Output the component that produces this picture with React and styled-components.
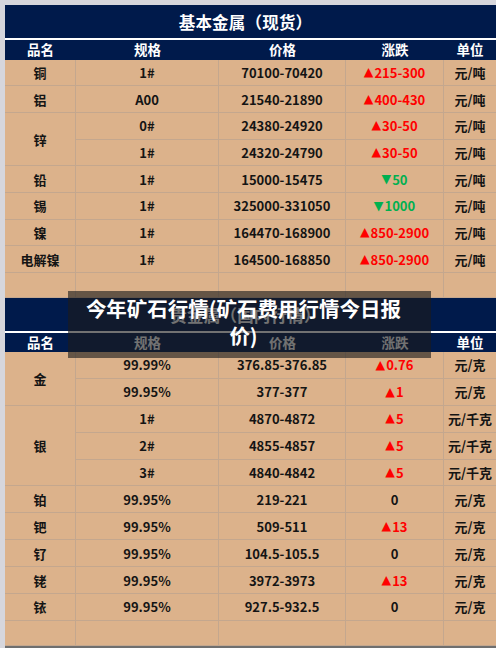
import React from "react";
import styled, { createGlobalStyle } from "styled-components";

const Global = createGlobalStyle`
  html, body { margin: 0; padding: 0; background: #ffffff; }
  body { font-family: "Noto Sans CJK SC", "Noto Sans", sans-serif; }
`;

const NAVY = "#001a4b";
const ORANGE = "#dcb28b";
const LINE = "#c4a78e";

const Page = styled.div`
  position: relative;
  width: 491px;
  border-top: 5px solid #d6d6dc;
  border-left: 5px solid #d6d6dc;
  font-family: "Noto Sans CJK SC", "Noto Sans", sans-serif;
  font-weight: 700;
`;

const Title = styled.div`
  height: 33px;
  background: ${NAVY};
  color: #ffffff;
  font-size: 16.5px;
  display: flex;
  align-items: center;
  justify-content: center;
  padding-right: 10px;
  letter-spacing: 0.2px;
`;

const Sep = styled.div`
  height: 2px;
  background: #ffffff;
`;

const Grid = styled.div`
  display: grid;
  grid-template-columns: 71px 143px 127px 98px 52px;
  grid-template-rows: ${(p) => p.$header}px repeat(${(p) => p.$rows}, ${(p) => p.$rowH}px) ${(p) => p.$tail}px;
`;

const Head = styled.div`
  background: ${NAVY};
  color: #ffffff;
  font-size: 13.5px;
  display: flex;
  align-items: center;
  justify-content: center;
  line-height: 1;
`;

const Cell = styled.div`
  box-sizing: border-box;
  background: ${ORANGE};
  border-bottom: 1px solid ${LINE};
  border-right: ${(p) => (p.$last ? "none" : `1px solid ${LINE}`)};
  grid-row: ${(p) => (p.$span ? `span ${p.$span}` : "auto")};
  color: ${(p) => p.$color || "#141414"};
  font-size: 13px;
  display: flex;
  align-items: center;
  justify-content: center;
  white-space: nowrap;
  line-height: 1;
`;

const Tri = styled.span`
  font-family: "DejaVu Sans", sans-serif;
  font-size: 12.5px;
  margin-right: 1px;
`;

const Bottom = styled.div`
  height: 2px;
  background: #6f6f6f;
`;

const Overlay = styled.div`
  position: absolute;
  left: 63px;
  top: 286px;
  width: 363px;
  height: 67px;
  box-sizing: border-box;
  padding: 4px 22px 0 10px;
  background: rgba(28, 28, 28, 0.62);
  color: #ffffff;
  font-size: 20.5px;
  line-height: 27px;
  text-align: center;
  font-weight: 700;
`;

const basic = [
  { name: "铜", spec: "1#", price: "70100-70420", chg: "▲215-300", unit: "元/吨" },
  { name: "铝", spec: "A00", price: "21540-21890", chg: "▲400-430", unit: "元/吨" },
  { name: "锌", span: 2, spec: "0#", price: "24380-24920", chg: "▲30-50", unit: "元/吨" },
  { spec: "1#", price: "24320-24790", chg: "▲30-50", unit: "元/吨" },
  { name: "铅", spec: "1#", price: "15000-15475", chg: "▼50", unit: "元/吨" },
  { name: "锡", spec: "1#", price: "325000-331050", chg: "▼1000", unit: "元/吨" },
  { name: "镍", spec: "1#", price: "164470-168900", chg: "▲850-2900", unit: "元/吨" },
  { name: "电解镍", spec: "1#", price: "164500-168850", chg: "▲850-2900", unit: "元/吨" },
];

const precious = [
  { name: "金", span: 2, spec: "99.99%", price: "376.85-376.85", chg: "▲0.76", unit: "元/克" },
  { spec: "99.95%", price: "377-377", chg: "▲1", unit: "元/克" },
  { name: "银", span: 3, spec: "1#", price: "4870-4872", chg: "▲5", unit: "元/千克" },
  { spec: "2#", price: "4855-4857", chg: "▲5", unit: "元/千克" },
  { spec: "3#", price: "4840-4842", chg: "▲5", unit: "元/千克" },
  { name: "铂", spec: "99.95%", price: "219-221", chg: "0", unit: "元/克" },
  { name: "钯", spec: "99.95%", price: "509-511", chg: "▲13", unit: "元/克" },
  { name: "钌", spec: "99.95%", price: "104.5-105.5", chg: "0", unit: "元/克" },
  { name: "铑", spec: "99.95%", price: "3972-3973", chg: "▲13", unit: "元/克" },
  { name: "铱", spec: "99.95%", price: "927.5-932.5", chg: "0", unit: "元/克" },
];

const headers = ["品名", "规格", "价格", "涨跌", "单位"];

function Change({ value }) {
  const first = value[0];
  if (first === "▲" || first === "▼") {
    return (
      <>
        <Tri>{first}</Tri>
        {value.slice(1)}
      </>
    );
  }
  return value;
}

function chgColor(v) {
  if (v[0] === "▲") return "#ff0000";
  if (v[0] === "▼") return "#00b050";
  return undefined;
}

function Section({ title, rows, header, rowH, tail }) {
  return (
    <>
      <Title>{title}</Title>
      <Sep />
      <Grid $header={header} $rows={rows.length} $rowH={rowH} $tail={tail}>
        {headers.map((h) => (
          <Head key={h}>{h}</Head>
        ))}
        {rows.map((r, i) => (
          <React.Fragment key={i}>
            {r.name && <Cell $span={r.span}>{r.name}</Cell>}
            <Cell>{r.spec}</Cell>
            <Cell>{r.price}</Cell>
            <Cell $color={chgColor(r.chg)}>
              <Change value={r.chg} />
            </Cell>
            <Cell $last>{r.unit}</Cell>
          </React.Fragment>
        ))}
        <Cell />
        <Cell />
        <Cell />
        <Cell />
        <Cell $last />
      </Grid>
    </>
  );
}

export default function App() {
  return (
    <>
      <Global />
      <Page>
        <Section title="基本金属（现货）" rows={basic} header={19.5} rowH={26.7} tail={25} />
        <Section title="贵金属（国内行情）" rows={precious} header={19} rowH={26.9} tail={25} />
        <Bottom />
        <Overlay>今年矿石行情(矿石费用行情今日报价)</Overlay>
      </Page>
    </>
  );
}
